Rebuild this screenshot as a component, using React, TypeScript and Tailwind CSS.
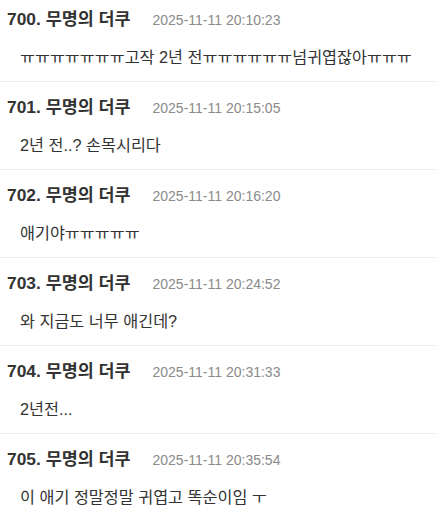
import React from 'react';

const comments = [
  { no: 700, time: '2025-11-11 20:10:23', text: 'ㅠㅠㅠㅠㅠㅠㅠ고작 2년 전ㅠㅠㅠㅠㅠㅠ넘귀엽잖아ㅠㅠㅠ' },
  { no: 701, time: '2025-11-11 20:15:05', text: '2년 전..? 손목시리다' },
  { no: 702, time: '2025-11-11 20:16:20', text: '애기야ㅠㅠㅠㅠㅠ' },
  { no: 703, time: '2025-11-11 20:24:52', text: '와 지금도 너무 애긴데?' },
  { no: 704, time: '2025-11-11 20:31:33', text: '2년전...' },
  { no: 705, time: '2025-11-11 20:35:54', text: '이 애기 정말정말 귀엽고 똑순이임 ㅜ' },
];

export default function App() {
  return (
    <div className="w-[437px] h-[521px] overflow-hidden bg-white font-['Liberation_Sans','Noto_Sans_CJK_KR',sans-serif]">
      <div className="-mt-[6px]">
        {comments.map((c) => (
          <div key={c.no} className="h-[88px] border-b border-[#eeeeee] pt-[14px]">
            <div className="flex items-baseline pl-[7px] h-[22px] leading-[22px]">
              <span className="text-[17.4px] font-bold text-[#333333]">{c.no}. 무명의 더쿠</span>
              <span className="ml-[22px] text-[14px] text-[#8a8a8a]">{c.time}</span>
            </div>
            <div className="mt-[17px] pl-[20px] text-[16.25px] text-[#333333] leading-[20px]">{c.text}</div>
          </div>
        ))}
      </div>
    </div>
  );
}
